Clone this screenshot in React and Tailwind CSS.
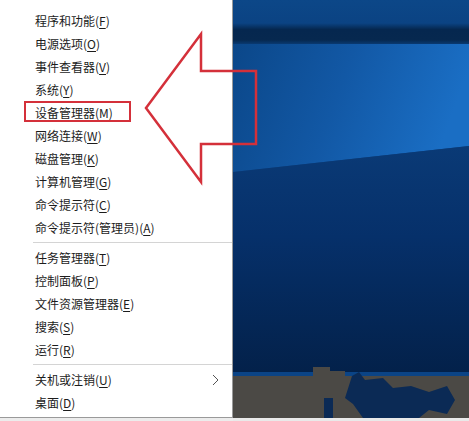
import React from 'react';

const groups = [
  [
    ['程序和功能', 'F'],
    ['电源选项', 'O'],
    ['事件查看器', 'V'],
    ['系统', 'Y'],
    ['设备管理器', 'M'],
    ['网络连接', 'W'],
    ['磁盘管理', 'K'],
    ['计算机管理', 'G'],
    ['命令提示符', 'C'],
    ['命令提示符(管理员)', 'A'],
  ],
  [
    ['任务管理器', 'T'],
    ['控制面板', 'P'],
    ['文件资源管理器', 'E'],
    ['搜索', 'S'],
    ['运行', 'R'],
  ],
  [
    ['关机或注销', 'U', true],
    ['桌面', 'D'],
  ],
];

const MenuRow = ({ label, hotkey, submenu }) => (
  <div className="h-[23px] flex items-center pl-[35px] pr-[13px] text-[12px] text-[#1c1c1c] leading-none">
    <span className="flex-1 whitespace-nowrap">
      {label}(<span className="underline underline-offset-2">{hotkey}</span>)
    </span>
    {submenu && (
      <svg width="7" height="12" viewBox="0 0 7 12" className="text-[#555]">
        <polyline points="1,1 6,6 1,11" fill="none" stroke="currentColor" strokeWidth="1" />
      </svg>
    )}
  </div>
);

const Wallpaper = () => (
  <svg viewBox="0 0 236 421" preserveAspectRatio="none" className="block w-full h-full">
    <defs>
      <linearGradient id="band" x1="0" y1="0" x2="0" y2="1">
        <stop offset="0" stopColor="#0c4788" />
        <stop offset="0.055" stopColor="#0b4383" />
        <stop offset="0.07" stopColor="#05274f" />
        <stop offset="0.095" stopColor="#06284f" />
        <stop offset="0.11" stopColor="#0b4486" />
        <stop offset="1" stopColor="#0b4486" />
      </linearGradient>
      <linearGradient id="beam" x1="0" y1="0" x2="1" y2="0.2">
        <stop offset="0" stopColor="#0b4789" />
        <stop offset="0.5" stopColor="#1258a5" />
        <stop offset="1" stopColor="#1a6ec4" />
      </linearGradient>
      <linearGradient id="lower" x1="0" y1="0" x2="0" y2="1">
        <stop offset="0" stopColor="#0a3a76" />
        <stop offset="0.4" stopColor="#06306a" />
        <stop offset="1" stopColor="#03214a" />
      </linearGradient>
    </defs>
    <rect x="0" y="0" width="236" height="421" fill="url(#band)" />
    <polygon points="0,44 236,44 236,146 0,172" fill="url(#beam)" />
    <polygon points="0,172 236,146 236,372 0,372" fill="url(#lower)" />
    <path
      d="M0,376 L80,376 L80,367 L97,367 L97,371 L112,371 L112,376 L236,376 L236,418 L0,418 Z"
      fill="#4b4945"
    />
    <path
      d="M119,376 L126,372 L132,380 L150,378 L160,388 L178,386 L196,392 L214,386 L222,400 L214,414 L196,410 L186,418 L130,418 L120,404 L112,398 Z"
      fill="#0b2a55"
    />
    <rect x="91" y="398" width="9" height="20" fill="#0b2a55" />
    <rect x="0" y="418" width="236" height="3" fill="#e9e9e9" />
  </svg>
);

export default function App() {
  return (
    <div className="relative w-[469px] h-[421px] overflow-hidden bg-[#ececec] flex font-['Noto_Sans_CJK_SC','Noto_Sans',sans-serif]">
      <div className="w-[233px] h-[418px] bg-white border-r border-b border-[#9a9a9a] pt-[9px] flex flex-col">
        {groups.map((group, gi) => (
          <React.Fragment key={gi}>
            {gi > 0 && <div className="ml-[33px] my-[3px] h-px bg-[#d4d4d4]" />}
            {group.map(([label, hotkey, submenu]) => (
              <MenuRow key={label} label={label} hotkey={hotkey} submenu={submenu} />
            ))}
          </React.Fragment>
        ))}
      </div>
      <div className="flex-1 h-full">
        <Wallpaper />
      </div>
      <svg
        className="absolute inset-0 pointer-events-none"
        width="469"
        height="421"
        viewBox="0 0 469 421"
      >
        <rect x="25" y="102" width="105" height="19" fill="none" stroke="#d4303a" strokeWidth="2" />
        <polygon
          points="146,108 201,34 201,71 256,71 256,144 201,144 201,182"
          fill="none"
          stroke="#d4303a"
          strokeWidth="2.5"
          strokeLinejoin="miter"
        />
      </svg>
    </div>
  );
}
